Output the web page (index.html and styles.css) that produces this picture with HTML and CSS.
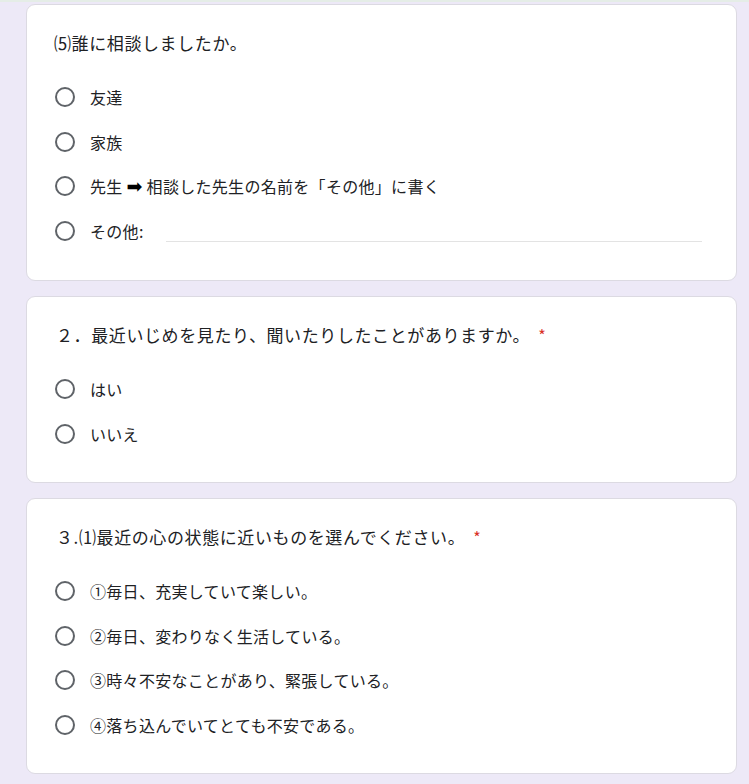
FILE: index.html
```html
<!DOCTYPE html>
<html lang="ja">
<head>
<meta charset="utf-8">
<link rel="stylesheet" href="styles.css">
</head>
<body>
<div class="topline"></div>
<main class="page">
  <section class="card first">
    <div class="title">⑸誰に相談しましたか。</div>
    <ul class="options">
      <li class="opt"><span class="radio"></span><span class="label">友達</span></li>
      <li class="opt"><span class="radio"></span><span class="label">家族</span></li>
      <li class="opt"><span class="radio"></span><span class="label">先生 <span class="arrow">➡</span> 相談した先生の名前を「その他」に書く</span></li>
      <li class="opt"><span class="radio"></span><span class="label">その他:</span><span class="other-input"></span></li>
    </ul>
  </section>
  <section class="card">
    <div class="title indent">２．最近いじめを見たり、聞いたりしたことがありますか。<span class="req">*</span></div>
    <ul class="options">
      <li class="opt"><span class="radio"></span><span class="label">はい</span></li>
      <li class="opt"><span class="radio"></span><span class="label">いいえ</span></li>
    </ul>
  </section>
  <section class="card">
    <div class="title indent">３.⑴最近の心の状態に近いものを選んでください。<span class="req">*</span></div>
    <ul class="options">
      <li class="opt"><span class="radio"></span><span class="label">①毎日、充実していて楽しい。</span></li>
      <li class="opt"><span class="radio"></span><span class="label">②毎日、変わりなく生活している。</span></li>
      <li class="opt"><span class="radio"></span><span class="label">③時々不安なことがあり、緊張している。</span></li>
      <li class="opt"><span class="radio"></span><span class="label">④落ち込んでいてとても不安である。</span></li>
    </ul>
  </section>
</main>
</body>
</html>
```

FILE: styles.css
```css
html, body {
  margin: 0;
  padding: 0;
  background: #ede9f7;
}
body {
  font-family: "Noto Sans CJK JP", "Noto Sans", sans-serif;
  color: #202124;
  font-size: 16px;
}
.topline {
  height: 2px;
  background: #e5ede7;
}
.page {
  display: flex;
  flex-direction: column;
  gap: 15px;
  padding: 2px 12px 0 26px;
}
.card {
  background: #fff;
  border: 1px solid #dcdae2;
  border-radius: 9px;
  padding: 26px 0 26px 27px;
}
.card.first {
  padding-bottom: 27px;
}
.title {
  font-size: 17px;
  line-height: 24px;
  letter-spacing: 0.6px;
  margin-bottom: 20px;
}
.title.indent {
  padding-left: 2px;
}
.req {
  color: #d93025;
  margin-left: 8px;
  font-size: 16px;
}
.options {
  list-style: none;
  margin: 0;
  padding: 0;
}
.opt {
  height: 44.5px;
  display: flex;
  align-items: center;
}
.radio {
  width: 16px;
  height: 16px;
  border: 2px solid #5f6368;
  border-radius: 50%;
  margin-left: 1px;
  flex: none;
}
.label {
  margin-left: 15px;
  letter-spacing: 0.3px;
  line-height: 24px;
}
.arrow {
  font-family: "DejaVu Sans", sans-serif;
  color: #000;
  font-size: 19px;
  line-height: 1;
}
.other-input {
  flex: 1;
  height: 1px;
  background: #e3e3e3;
  margin: 22px 34px 0 22px;
}
```
